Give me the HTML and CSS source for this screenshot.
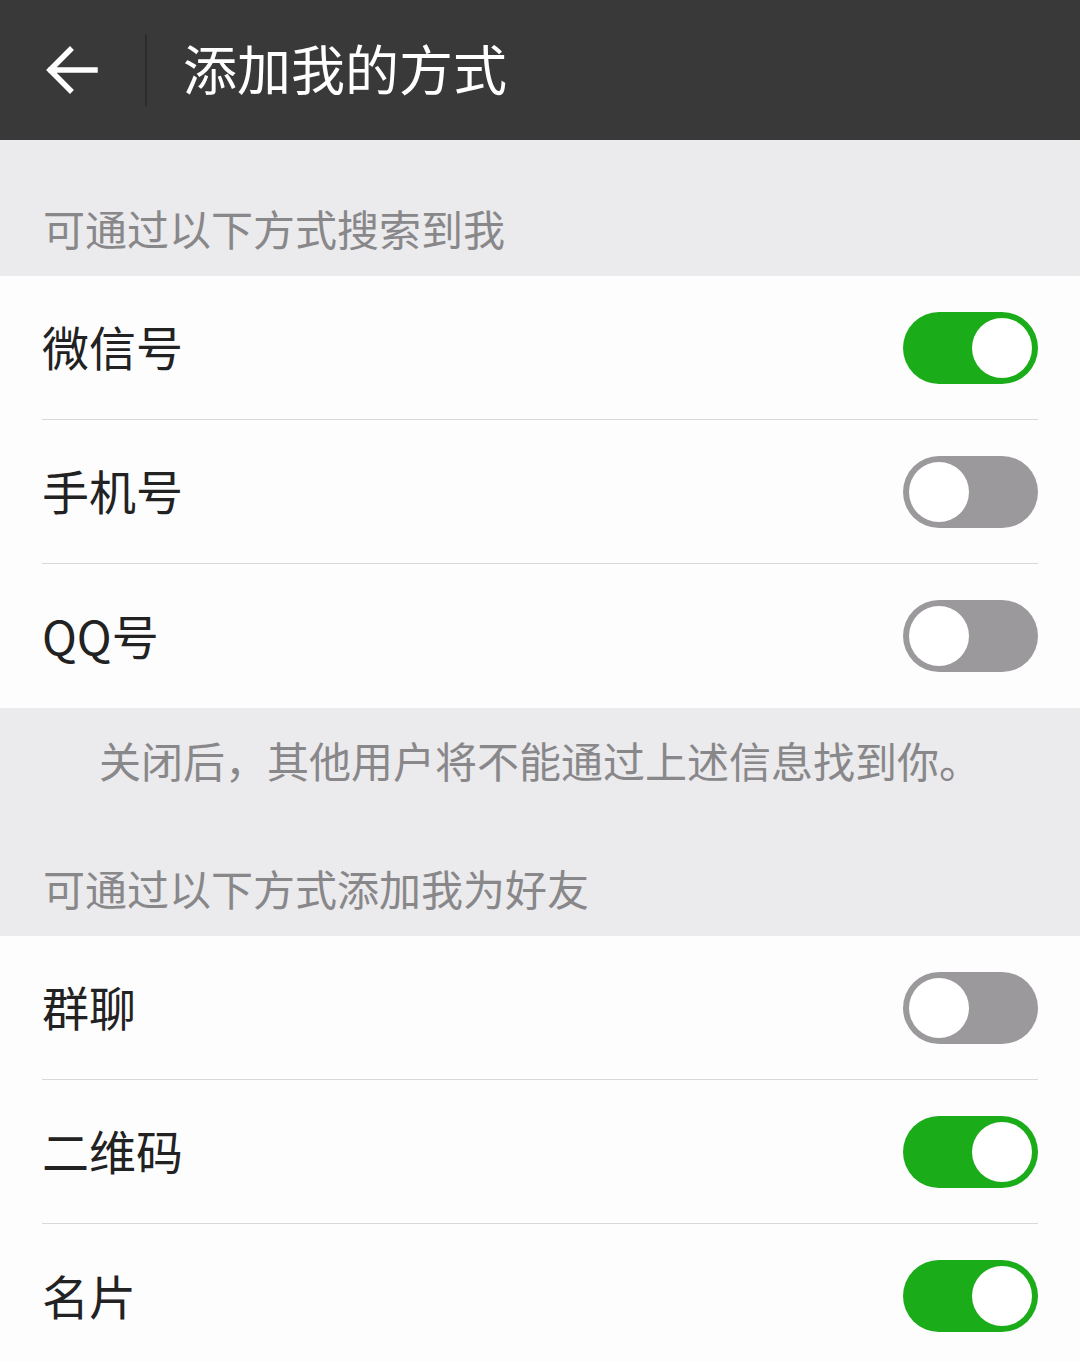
FILE: index.html
```html
<!DOCTYPE html>
<html lang="zh-CN">
<head>
  <meta charset="UTF-8">
  <title>添加我的方式</title>
  <meta name="viewport" content="width=device-width, initial-scale=1.0">
  <link rel="stylesheet" href="styles.css">
</head>
<body>

<div class="topbar">
  <div class="back">
    <svg width="52" height="50" viewBox="0 0 52 50">
      <path d="M49 25 H5 M24 5 L4 25 L24 45" fill="none" stroke="#fff" stroke-width="5.5" stroke-linecap="square"/>
    </svg>
  </div>
  <div class="bar-line"></div>
  <div class="title">添加我的方式</div>
</div>

<div class="label">可通过以下方式搜索到我</div>
<div class="group">
  <div class="row"><span>微信号</span><div class="switch on"></div></div>
  <div class="row"><span>手机号</span><div class="switch"></div></div>
  <div class="row"><span>QQ号</span><div class="switch"></div></div>
</div>

<div class="note">关闭后，其他用户将不能通过上述信息找到你。</div>

<div class="label">可通过以下方式添加我为好友</div>
<div class="group">
  <div class="row"><span>群聊</span><div class="switch"></div></div>
  <div class="row"><span>二维码</span><div class="switch on"></div></div>
  <div class="row"><span>名片</span><div class="switch on"></div></div>
</div>

</body>
</html>
```

FILE: styles.css
```css
body {
  margin: 0;
  background-color: #ebeaec;
  font-family: "Noto Sans CJK SC", "Noto Sans", sans-serif;
}
.topbar {
  height: 140px;
  background-color: #39393a;
  display: flex;
  align-items: center;
}
.back {
  width: 145px;
  padding-left: 46px;
  box-sizing: border-box;
  display: flex;
  align-items: center;
}
.bar-line {
  width: 2px;
  height: 72px;
  background-color: #2c2c2c;
}
.title {
  margin-left: 36px;
  color: #fff;
  font-size: 54px;
  line-height: 70px;
  margin-top: -5px;
}
.label {
  height: 136px;
  box-sizing: border-box;
  display: flex;
  align-items: flex-end;
  padding: 0 43px 20px;
  font-size: 42px;
  line-height: 56px;
  color: #888789;
}
.group {
  background-color: #fdfdfe;
  padding: 0 42px;
}
.row {
  height: 144px;
  box-sizing: border-box;
  display: flex;
  align-items: center;
  justify-content: space-between;
  border-bottom: 1px solid #d8d8da;
  font-size: 47px;
  color: #222;
}
.row span {
  margin-top: -4px;
}
.row:last-child {
  border-bottom: none;
}
.switch {
  position: relative;
  width: 135px;
  height: 72px;
  border-radius: 36px;
  background-color: #9b999c;
}
.switch::after {
  content: "";
  position: absolute;
  top: 6px;
  left: 6px;
  width: 60px;
  height: 60px;
  border-radius: 50%;
  background-color: #fff;
}
.switch.on {
  background-color: #1aac19;
}
.switch.on::after {
  left: 69px;
}
.note {
  padding: 24px 0 12px;
  text-align: center;
  font-size: 42px;
  line-height: 56px;
  color: #888789;
}
```
